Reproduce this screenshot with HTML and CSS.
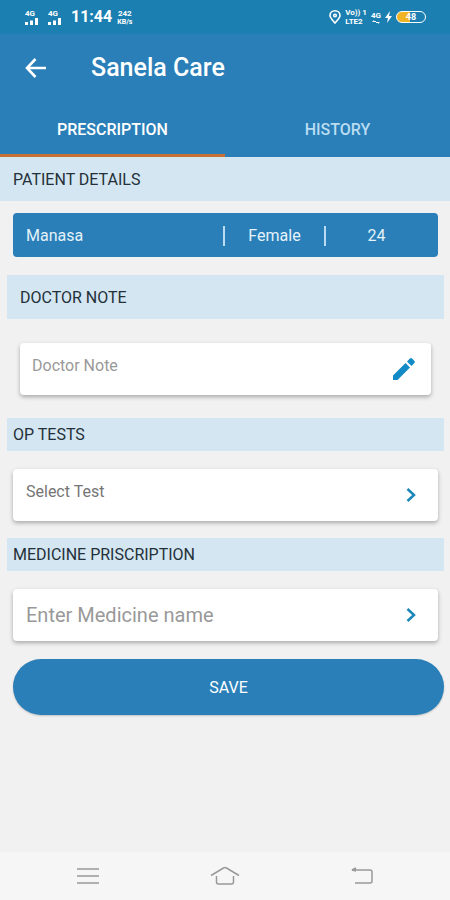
FILE: index.html
```html
<!DOCTYPE html>
<html lang="en">
<head>
<meta charset="utf-8">
<meta name="viewport" content="width=device-width, initial-scale=1">
<title>Sanela Care</title>
<link rel="stylesheet" href="styles.css">
</head>
<body>
<div class="screen">
  <div class="status">
    <div class="status-group">
      <div class="signal"><span>4G</span><svg width="14" height="7" viewBox="0 0 14 7" aria-hidden="true"><path d="M0 4h3v3H0zM5 2.500h3V7H5zM10 0h3v7h-3z"/></svg></div>
      <div class="signal"><span>4G</span><svg width="14" height="7" viewBox="0 0 14 7" aria-hidden="true"><path d="M0 4h3v3H0zM5 2.500h3V7H5zM10 0h3v7h-3z"/></svg></div>
      <span class="clock">11:44</span>
      <div class="speed"><span>242</span><span class="unit">KB/s</span></div>
    </div>
    <div class="status-group right">
      <svg width="12" height="14" viewBox="0 0 12 14" fill="none" stroke="#fff" stroke-width="1.600" aria-hidden="true"><path d="M6 13C3.500 10 1 7.800 1 5.500a5 4.700 0 0 1 10 0C11 7.800 8.500 10 6 13z"/><circle cx="6" cy="5.500" r="1.300"/></svg>
      <div class="volte"><span>Vo)) 1</span><span>LTE2</span></div>
      <div class="data"><span>4G</span><svg width="8" height="4" viewBox="0 0 8 4" aria-hidden="true"><path d="M0 2l2-2v1h2v1zM8 2L6 4V3H4V2z"/></svg></div>
      <svg width="7" height="12" viewBox="0 0 7 12" aria-hidden="true"><path d="M5 0L0 7h3l-1 5 5-7H4z"/></svg>
      <div class="battery"><span>48</span></div>
    </div>
  </div>

  <header class="header">
    <div class="titlebar">
      <button class="icon-button" type="button" aria-label="Back"><svg width="22" height="20" viewBox="0 0 22 20" fill="none" stroke="#fff" stroke-width="2.600" aria-hidden="true"><path d="M10.500 1L2 10l8.500 9M2 10h19"/></svg></button>
      <h1>Sanela Care</h1>
    </div>
    <nav class="tabs">
      <a class="tab active" href="#prescription">PRESCRIPTION</a>
      <a class="tab" href="#history">HISTORY</a>
    </nav>
  </header>

  <main id="prescription" class="content">
    <h2 class="band wide tall">PATIENT DETAILS</h2>
    <div class="patient">
      <span class="name">Manasa</span>
      <span class="gender">Female</span>
      <span class="age">24</span>
    </div>

    <h2 class="band tall indented"><label for="note">DOCTOR NOTE</label></h2>
    <div class="field note">
      <input id="note" type="text" placeholder="Doctor Note">
      <button class="icon-button" type="button" aria-label="Edit note"><svg width="24" height="24" viewBox="0 0 24 24" fill="#118ac6" aria-hidden="true"><path d="M1 18.500V23h4.500L18 10.500 13.500 6zM22.400 6.100a1.600 1.600 0 0 0 0-2.200l-2.300-2.300a1.600 1.600 0 0 0-2.200 0L15 4.500 19.500 9z"/></svg></button>
    </div>

    <h2 class="band">OP TESTS</h2>
    <button class="field test" type="button">
      <span>Select Test</span>
      <svg class="chevron" width="10" height="16" viewBox="0 0 10 16" aria-hidden="true"><path d="M1.500 2L8 8l-6.500 6"/></svg>
    </button>

    <h2 class="band"><label for="medicine">MEDICINE PRISCRIPTION</label></h2>
    <div class="field medicine">
      <input id="medicine" type="text" placeholder="Enter Medicine name">
      <button class="icon-button" type="button" aria-label="Choose medicine"><svg class="chevron" width="10" height="16" viewBox="0 0 10 16" aria-hidden="true"><path d="M1.500 2L8 8l-6.500 6"/></svg></button>
    </div>

    <button class="save" type="button">SAVE</button>
  </main>

  <nav class="system" aria-label="System">
    <button class="icon-button" type="button" aria-label="Recent apps"><svg width="22" height="18" viewBox="0 0 22 18" aria-hidden="true"><path d="M0 2h22M0 9h22M0 16h22"/></svg></button>
    <button class="icon-button" type="button" aria-label="Home"><svg width="30" height="20" viewBox="0 0 30 20" aria-hidden="true"><path d="M1 9.500L13.500 2q1.500-.8 3 0L29 9.500M6.500 10v6q0 2 2 2h13q2 0 2-2v-6"/></svg></button>
    <button class="icon-button" type="button" aria-label="Go back"><svg width="22" height="18" viewBox="0 0 22 18" aria-hidden="true"><path d="M5 1L1 3h18q2 0 2 2v9q0 2-2 2H4M1 3l4 1"/></svg></button>
  </nav>
</div>
</body>
</html>
```
FILE: styles.css
```css
* { box-sizing: border-box; }
body {
  margin: 0;
  background: #f1f1f1;
  color: #243039;
  font: 16px/20px Roboto, "Liberation Sans", sans-serif;
}
button, input { font: inherit; color: inherit; border: 0; padding: 0; background: none; }
h1, h2 { margin: 0; font-weight: 400; }
svg { display: block; flex: none; }
.screen { min-height: 100vh; display: flex; flex-direction: column; }
.icon-button { display: grid; place-items: center; flex: none; }

.status {
  height: 34px;
  padding: 0 24px 0 25px;
  display: flex;
  align-items: center;
  justify-content: space-between;
  background: #1c7fb1;
  color: #fff;
}
.status svg { fill: #fff; }
.status .right svg:first-child { fill: none; }
.status-group { display: flex; align-items: center; gap: 9px; }
.status-group.right { gap: 4px; }
.signal, .speed, .volte, .data { display: flex; flex-direction: column; font-size: 8px; line-height: 9px; font-weight: 700; }
.speed { align-items: center; margin-left: -4px; }
.unit { font-size: 7px; line-height: 8px; }
.clock { font-size: 16px; font-weight: 700; }
.data { align-items: center; }
.battery {
  width: 30px;
  height: 12px;
  border: 1px solid #fff;
  border-radius: 6px;
  background: linear-gradient(to right, #f0b323 48%, transparent 48%);
  font-size: 9px;
  line-height: 10px;
  font-weight: 700;
  text-align: center;
}

.header { background: #2a7fb8; color: #fff; }
.titlebar { height: 68px; padding: 0 25px; display: flex; align-items: center; gap: 44px; }
h1 { font-size: 25px; line-height: 32px; font-weight: 500; }
.tabs { display: grid; grid-template-columns: 1fr 1fr; }
.tab {
  height: 55px;
  padding-top: 3px;
  display: grid;
  place-items: center;
  border-bottom: 3px solid transparent;
  color: #b9dcf2;
  font-weight: 500;
  text-decoration: none;
}
.tab.active { color: #fff; border-color: #c87137; }

.content { flex: 1; display: flex; flex-direction: column; }
.band {
  margin: 0 6px 0 7px;
  padding: 7px 6px 6px;
  background: #d3e6f1;
  font-size: 16px;
}
.band.tall { padding-top: 13px; padding-bottom: 11px; }
.band.wide { margin: 0; padding-left: 13px; }
.band.indented { padding-left: 13px; }

.patient {
  height: 44px;
  margin: 12px 12px 18px 13px;
  padding-top: 1px;
  display: grid;
  grid-template-columns: 210fr 103fr 112fr;
  align-items: center;
  border-radius: 4px;
  background: #2a7fb8;
  color: #e4f2fa;
}
.name { padding-left: 13px; }
.gender { text-align: center; border: solid #b9dcf2; border-width: 0 2px; }
.age { padding-right: 11px; text-align: center; }

.field {
  height: 52px;
  margin: 18px 12px 17px 13px;
  padding: 0 22px 0 13px;
  display: flex;
  align-items: center;
  justify-content: space-between;
  border-radius: 4px;
  background: #fff;
  box-shadow: 0 2px 4px rgba(0, 0, 0, .3);
}
.field input { flex: 1; min-width: 0; outline-offset: 4px; }
.field input::placeholder { color: #999; opacity: 1; }
.note { margin: 24px 19px 23px 20px; padding: 0 15px 0 12px; }
.note input { padding-bottom: 6px; }
.test { color: #757575; }
.test span { padding-bottom: 6px; }
.medicine { margin-bottom: 18px; }
.medicine input { font-size: 20px; line-height: 24px; }
.chevron { fill: none; stroke: #1b86b8; stroke-width: 2.5; }

.save {
  height: 56px;
  margin: 0 6px 18px 13px;
  padding-top: 2px;
  border-radius: 28px;
  background: #2a7fb8;
  color: #fff;
  box-shadow: 0 1px 2px rgba(0, 0, 0, .2);
}

.system {
  height: 48px;
  padding: 0 77px;
  display: flex;
  align-items: center;
  justify-content: space-between;
  background: #f6f6f6;
}
.system svg { fill: none; stroke: #999; stroke-width: 1.5; }
```
